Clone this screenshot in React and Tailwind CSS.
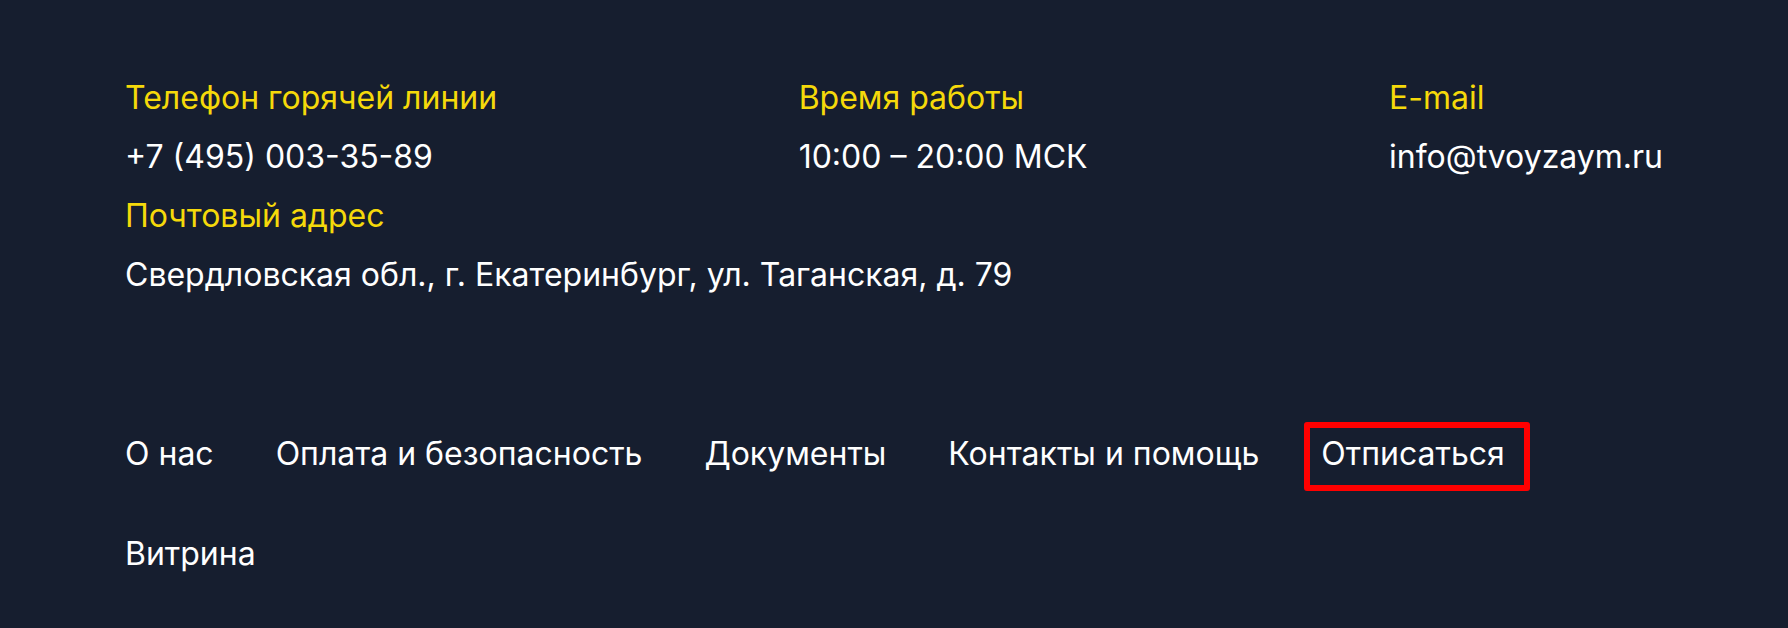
import React from "react";

export default function App() {
  const nav = ["О нас", "Оплата и безопасность", "Документы", "Контакты и помощь"];
  return (
    <div
      className="w-[1788px] h-[628px] bg-[#161e2f] px-[125px] pt-[78px] text-[32px] leading-[39px] text-white"
      style={{ fontFamily: "Inter, 'Noto Sans', sans-serif" }}
    >
      <div className="flex justify-between">
        <div className="flex flex-col gap-5">
          <div className="text-[#f5d90a]">Телефон горячей линии</div>
          <div>+7 (495) 003-35-89</div>
        </div>
        <div className="flex flex-col gap-5">
          <div className="text-[#f5d90a]">Время работы</div>
          <div>10:00 – 20:00 МСК</div>
        </div>
        <div className="flex flex-col gap-5">
          <div className="text-[#f5d90a]">E-mail</div>
          <div>info@tvoyzaym.ru</div>
        </div>
      </div>
      <div className="mt-5 flex flex-col gap-5">
        <div className="text-[#f5d90a]">Почтовый адрес</div>
        <div>Свердловская обл., г. Екатеринбург, ул. Таганская, д. 79</div>
      </div>
      <nav className="mt-[140px] flex flex-wrap gap-x-[62px] gap-y-[61px]">
        {nav.map((n) => (
          <a key={n} className="block">{n}</a>
        ))}
        <a className="relative block">
          Отписаться
          <span className="absolute left-[-17px] right-[-25px] top-[-12px] bottom-[-18px] rounded-[3px] border-[6px] border-[#ff0000]" />
        </a>
        <a className="block">Витрина</a>
      </nav>
    </div>
  );
}
